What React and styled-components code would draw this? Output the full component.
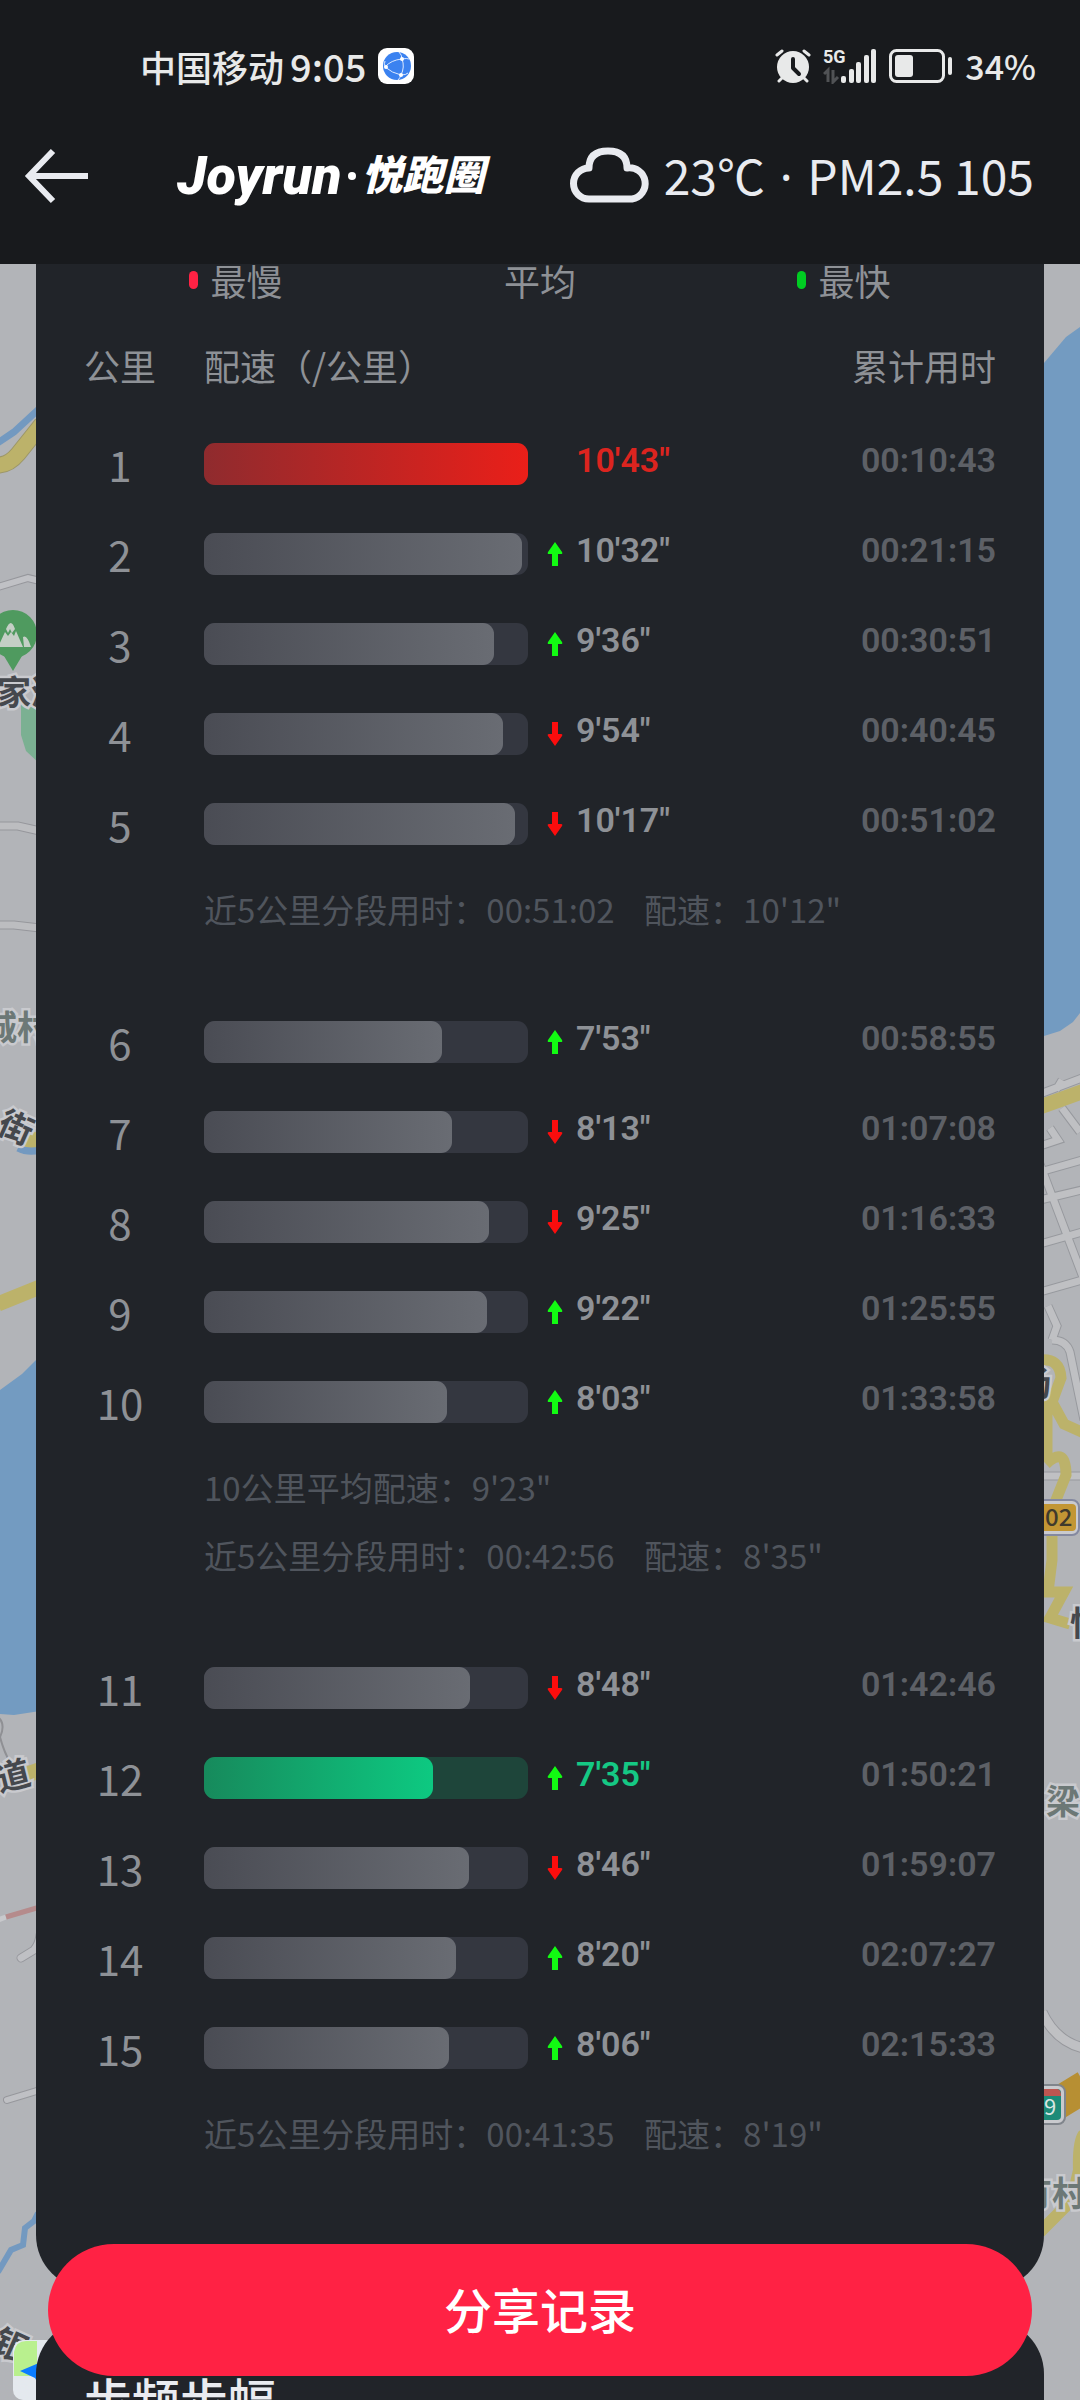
import React from "react";
import styled, { createGlobalStyle } from "styled-components";

const GlobalStyle = createGlobalStyle`
    * {
        box-sizing: border-box;
    }
    body {
        margin: 0;
        background-color: #b2b4b8;
        font-family: "Noto Sans CJK SC", "Noto Sans", sans-serif;
    }
`

const Screen = styled.div`
    position: relative;
    display: flex;
    flex-direction: column;
    height: 100vh;
    overflow: hidden;
`
const MapSvg = styled.svg`
    position: absolute;
    top: 0;
    left: 0;
    width: 100%;
    height: 100%;
    font-weight: 700;
`
const Header = styled.header`
    position: relative;
    flex: none;
    padding-bottom: 44px;
    background-color: #181a1d;
    color: #e9ebf0;
`
const StatusBar = styled.div`
    display: flex;
    align-items: center;
    justify-content: space-between;
    height: 132px;
    padding: 0 44px 0 140px;
    font-size: 36px;
    font-weight: 500;
    line-height: 44px;
    color: #e8e9e9;
`
const StatusGroup = styled.div`
    display: flex;
    align-items: center;
    gap: 12px;
`
const Carrier = styled.span`
    display: flex;
    align-items: center;
    gap: 6px;
`
const Clock = styled.span`
    font-size: 38px;
`
const BatteryLevel = styled.span`
    font-size: 34px;
`
const NavBar = styled.div`
    display: flex;
    align-items: center;
    height: 88px;
    padding: 0 46px 0 24px;
`
const BackButton = styled.button`
    display: flex;
    padding: 0;
    border: none;
    background: none;
    color: inherit;
    cursor: pointer;
`
const Logo = styled.h1`
    flex: 1;
    display: flex;
    align-items: center;
    gap: 6px;
    margin: 0 0 0 86px;
    font-family: Roboto, "Noto Sans CJK SC", sans-serif;
    font-size: 54px;
    font-style: italic;
    font-weight: 900;
    line-height: 60px;
    white-space: nowrap;
    color: #ffffff;
`
const LogoDot = styled.i`
    width: 8px;
    height: 8px;
    border-radius: 50%;
    background-color: #ffffff;
`
const LogoName = styled.span`
    font-size: 41px;
`
const Weather = styled.div`
    display: flex;
    align-items: center;
    gap: 14px;
    padding-bottom: 2px;
    font-size: 48px;
    line-height: 60px;
    white-space: nowrap;
`
const WeatherDot = styled.span`
    margin: 0 4px;
    font-family: "Noto Sans", sans-serif;
`
const Content = styled.main`
    position: relative;
    flex: 1;
    min-height: 0;
    padding: 0 36px;
    overflow: hidden;
`
const PaceCard = styled.section`
    padding: 0 48px 68px;
    border-radius: 0 0 54px 54px;
    background-color: #212429;
    color: #8e9196;
`
const CadenceCard = styled.section`
    margin-top: 31px;
    padding: 46px 48px;
    border-radius: 54px;
    background-color: #212429;
`
const CardTitle = styled.h2`
    margin: 0;
    font-size: 48px;
    font-weight: 500;
    line-height: 64px;
    color: #e9ebf0;
`
const Legend = styled.div`
    display: grid;
    grid-template-columns: repeat(3, 1fr);
    padding-bottom: 19px;
    font-size: 36px;
    line-height: 32px;
`
const LegendItem = styled.div`
    display: flex;
    align-items: center;
    justify-content: center;
    gap: 12px;
`
const LegendMark = styled.i`
    width: 9px;
    height: 18px;
    border-radius: 5px;
    background-color: ${props => props.$color};
`
const PaceTable = styled.table`
    width: 100%;
    border-spacing: 0;
    table-layout: fixed;

    th, td {
        padding: 0;
        font-weight: 400;
        text-align: left;
        white-space: nowrap;
    }
`
const Col = styled.col`
    width: ${props => props.$width}px;
`
const HeadRow = styled.tr`
    height: 104px;
    font-size: 36px;
    line-height: 48px;

    && th {
        padding-bottom: 4px;
    }
`
const SplitRow = styled.tr`
    height: 90px;
`
const HeadKm = styled.th`
    && {
        padding-right: 48px;
        text-align: center;
    }
`
const HeadTime = styled.th`
    && {
        text-align: right;
    }
`
const KmCell = styled.th`
    font-size: 42px;
    line-height: 48px;

    && {
        padding-right: 48px;
        text-align: center;
    }
`
const Track = styled.div`
    height: 42px;
    border-radius: 11px;
    background-color: ${props => tones[props.$tone].track};
`
const Fill = styled.div`
    height: 42px;
    border-radius: 11px;
    background-image: ${props => tones[props.$tone].fill};
`
const TrendCell = styled.td`
    line-height: 0;

    && {
        padding-left: 6px;
        text-align: center;
    }
`
const PaceCell = styled.td`
    font-family: Roboto, "Noto Sans CJK SC", sans-serif;
    font-size: 34px;
    line-height: 48px;
    color: ${props => tones[props.$tone].text};

    && {
        padding-bottom: 8px;
        font-weight: 600;
    }
`
const TimeCell = styled(PaceCell)`
    color: #5d6066;

    && {
        text-align: right;
    }
`
const NoteCell = styled.td`
    font-size: 33px;
    color: #50555d;

    && {
        padding: 6px 0 54px;
        white-space: pre;
    }
`
const NoteLine = styled.p`
    margin: 0;
    line-height: 68px;
`
const ShareButton = styled.button`
    position: absolute;
    right: 48px;
    bottom: 24px;
    left: 48px;
    height: 132px;
    padding: 0 0 4px;
    border: none;
    border-radius: 66px;
    background-color: #ff2244;
    color: #ffffff;
    font-family: inherit;
    font-size: 48px;
    font-weight: 500;
    cursor: pointer;
`

const tones = {
    normal: {
        track: "#343740",
        fill: "linear-gradient(90deg, #4a4c54, #696c73)",
        text: "#8e9196"
    },
    slow: {
        track: "#48282b",
        fill: "linear-gradient(90deg, #8f2b2e, #ea1f19)",
        text: "#dc241f"
    },
    fast: {
        track: "#1e453a",
        fill: "linear-gradient(90deg, #178a5c, #0dc981)",
        text: "#15c884"
    }
}

// pace is in seconds per kilometre
const groups = [
    {
        splits: [
            { km: 1, pace: 643, total: "00:10:43", tone: "slow" },
            { km: 2, pace: 632, total: "00:21:15", trend: "up" },
            { km: 3, pace: 576, total: "00:30:51", trend: "up" },
            { km: 4, pace: 594, total: "00:40:45", trend: "down" },
            { km: 5, pace: 617, total: "00:51:02", trend: "down" }
        ],
        notes: ["近5公里分段用时：00:51:02    配速：10'12\""]
    },
    {
        splits: [
            { km: 6, pace: 473, total: "00:58:55", trend: "up" },
            { km: 7, pace: 493, total: "01:07:08", trend: "down" },
            { km: 8, pace: 565, total: "01:16:33", trend: "down" },
            { km: 9, pace: 562, total: "01:25:55", trend: "up" },
            { km: 10, pace: 483, total: "01:33:58", trend: "up" }
        ],
        notes: [
            "10公里平均配速：9'23\"",
            "近5公里分段用时：00:42:56    配速：8'35\""
        ]
    },
    {
        splits: [
            { km: 11, pace: 528, total: "01:42:46", trend: "down" },
            { km: 12, pace: 455, total: "01:50:21", trend: "up", tone: "fast" },
            { km: 13, pace: 526, total: "01:59:07", trend: "down" },
            { km: 14, pace: 500, total: "02:07:27", trend: "up" },
            { km: 15, pace: 486, total: "02:15:33", trend: "up" }
        ],
        notes: ["近5公里分段用时：00:41:35    配速：8'19\""]
    }
]

const slowest = 643

const formatPace = (seconds) => {
    const rest = String(seconds % 60).padStart(2, "0")
    return `${Math.floor(seconds / 60)}′${rest}″`
}

const MapLabel = ({ x, y, turn, color = "#45484d", children }) => (
    <text
        x={x}
        y={y}
        fontSize="34"
        fill={color}
        stroke="#c9cace"
        strokeWidth="5"
        paintOrder="stroke"
        transform={turn ? `rotate(${turn} ${x + 17} ${y - 12})` : undefined}
    >
        {children}
    </text>
)

const MapBackground = () => (
    <MapSvg viewBox="0 0 1080 2400" preserveAspectRatio="none" aria-hidden="true">
        <rect width="1080" height="2400" fill="#b2b4b8" />

        {/* west side */}
        <g fill="none">
            <path d="M40 396V408L14 432L-4 444" stroke="#7399c0" strokeWidth="7" />
            <path d="M42 424L18 454Q8 466-4 465" stroke="#9c9668" strokeWidth="17" />
            <path d="M42 424L18 454Q8 466-4 465" stroke="#bcb26a" strokeWidth="15" />
            <path d="M-2 587L28 578L40 581" stroke="#96979c" strokeWidth="8" />
            <path d="M-2 587L28 578L40 581" stroke="#c0c1c5" strokeWidth="6" />
            <path d="M-2 826H18L40 831M-2 925H14L40 928" stroke="#96979c" strokeWidth="9" />
            <path d="M-2 826H18L40 831M-2 925H14L40 928" stroke="#bcbdc0" strokeWidth="7" />
            <path d="M-2 1304L40 1287" stroke="#bcb26a" strokeWidth="15" />
            <path d="M-2 1717Q6 1724 0 1737Q4 1752 10 1762" stroke="#8f9094" strokeWidth="2" />
            <path d="M26 1775L40 1770" stroke="#bcb26a" strokeWidth="16" />
            <path d="M-2 1920L6 1917" stroke="#c8c9cc" strokeWidth="5" />
            <path d="M6 1917L40 1907" stroke="#b58b8c" strokeWidth="5" />
            <path d="M21 1958L34 1950Q39 1944 40 1935" stroke="#96979c" strokeWidth="9" strokeLinecap="round" />
            <path d="M21 1958L34 1950Q39 1944 40 1935" stroke="#bfc0c4" strokeWidth="7" strokeLinecap="round" />
            <path d="M7 2100L40 2090" stroke="#96979c" strokeWidth="8" strokeLinecap="round" />
            <path d="M7 2100L40 2090" stroke="#bfc0c4" strokeWidth="6" strokeLinecap="round" />
            <path d="M38 2213L34 2221L25 2228L23 2245L11 2250L-2 2272" stroke="#7399c0" strokeWidth="6" />
        </g>
        <path d="M21 704H40V764L26 751L21 735Z" fill="#7bb092" />
        <path d="M0 1390L22 1374L40 1356V1711L14 1715L0 1714Z" fill="#739bc1" />
        <path d="M24 1146Q28 1130 40 1132V1148H28Z" fill="#bcb26a" />
        <path d="M18 1148Q28 1153 40 1150" fill="none" stroke="#7399c0" strokeWidth="7" />
        <circle cx="13" cy="634" r="24" fill="#4f9a5f" />
        <path d="M4 656L13 671L22 656Z" fill="#4f9a5f" />
        <path d="M-2 647L5 632L8 636L11 632L14 636L16 631L23 647ZM6 629Q11 617 15 629L12 633L10 629L8 633ZM24 647L23 637Q27 634 31 647Z" fill="#c4cfc6" />
        <MapLabel x={-3} y={705}>家湾</MapLabel>
        <MapLabel x={-17} y={1040} color="#6c7876">城村</MapLabel>
        <MapLabel x={-1} y={1140} turn={24}>街</MapLabel>
        <MapLabel x={-4} y={1788} turn={-14}>道</MapLabel>
        <MapLabel x={-6} y={2358} turn={24}>银</MapLabel>
        <rect x="13" y="2340" width="62" height="60" rx="10" fill="#e4e9ee" />
        <path d="M14 2376V2352Q16 2341 26 2341H37V2376Z" fill="#b9f08e" />
        <path d="M20 2371L60 2354L44 2394L35 2378Z" fill="#0a7cff" />

        {/* east side */}
        <path d="M1044 363L1066 337L1080 327V1013L1073 1022L1060 1031L1044 1036Z" fill="#739bc1" />
        <g fill="none">
            <path
                d="M1040 1094L1082 1078M1056 1090L1062 1080M1040 1146L1058 1140L1050 1128M1062 1108L1080 1132M1040 1172L1082 1160M1040 1200L1082 1190M1040 1244L1082 1232M1040 1164L1084 1280M1040 1292L1082 1280M1048 1306L1057 1326L1052 1340M1052 1340Q1066 1340 1070 1352L1084 1420M1040 1476H1082"
                stroke="#97999e"
                strokeWidth="9"
            />
            <path
                d="M1040 1094L1082 1078M1056 1090L1062 1080M1040 1146L1058 1140L1050 1128M1062 1108L1080 1132M1040 1172L1082 1160M1040 1200L1082 1190M1040 1244L1082 1232M1040 1164L1084 1280M1040 1292L1082 1280M1048 1306L1057 1326L1052 1340M1052 1340Q1066 1340 1070 1352L1084 1420M1040 1476H1082"
                stroke="#bfc0c3"
                strokeWidth="7"
            />
            <path d="M1040 1107L1084 1091" stroke="#bcb26a" strokeWidth="15" />
            <path
                d="M1040 1360Q1060 1358 1061 1378L1052 1402L1064 1424L1084 1433M1047 1400V1462M1046 1464Q1066 1445 1066 1475L1052 1510V1560L1048 1592H1064L1050 1618L1070 1624"
                stroke="#bcb26a"
                strokeWidth="11"
            />
            <path d="M1042 2012Q1056 2042 1084 2048" stroke="#96979c" strokeWidth="11" />
            <path d="M1042 2012Q1056 2042 1084 2048" stroke="#bfc0c3" strokeWidth="9" />
            <path d="M1084 2134Q1078 2142 1079 2170L1072 2200L1040 2232" stroke="#bcb26a" strokeWidth="12" />
            <path d="M1050 2108L1086 2086" stroke="#b78f33" strokeWidth="32" />
        </g>
        <rect x="1012" y="1500" width="67" height="35" rx="7" fill="#c9cace" stroke="#8489a0" strokeWidth="2" />
        <rect x="1016" y="1504" width="60" height="27" rx="4" fill="#c29634" />
        <text x="1045" y="1526" fontSize="24" fontWeight="500" fill="#3f3a2c">02</text>
        <rect x="1020" y="2085" width="45" height="39" rx="7" fill="#c9cace" stroke="#80858c" strokeWidth="2" />
        <rect x="1024" y="2089" width="37" height="31" rx="4" fill="#1d8b78" />
        <path d="M1024 2096V2089H1057Q1061 2089 1061 2096Z" fill="#bd5651" />
        <text x="1044" y="2115" fontSize="22" fontWeight="400" fill="#d8e6e2">9</text>
        <MapLabel x={1017} y={1396}>场</MapLabel>
        <MapLabel x={1070} y={1636}>怡</MapLabel>
        <MapLabel x={1046} y={1814} color="#6c7876">梁</MapLabel>
        <MapLabel x={1018} y={2206} color="#6c7876">有村</MapLabel>
    </MapSvg>
)

const BrowserIcon = () => (
    <svg width="36" height="36" viewBox="0 0 36 36" aria-hidden="true">
        <rect width="36" height="36" rx="9" fill="#ffffff" />
        <circle cx="19" cy="18" r="14" fill="#3b82f0" />
        <g fill="none" stroke="#dce9ff" strokeWidth="1">
            <path d="M7 19Q13 12 24 11Q29 10 31 11M7 19Q14 25 23 27Q28 27 30 25M24 11Q27 19 23 27M21 4Q24 7 24 11M7 19Q6 15 7 13M23 27Q22 30 20 32" />
        </g>
        <g fill="#ffffff">
            <circle cx="24" cy="11" r="2" />
            <circle cx="8" cy="19" r="2" />
            <circle cx="23" cy="27" r="2" />
        </g>
    </svg>
)

const AlarmIcon = () => (
    <svg width="36" height="34" viewBox="0 0 36 34" aria-hidden="true">
        <circle cx="18" cy="18" r="16" fill="#e8e9e9" />
        <path d="M2 6L7 2M34 6L29 2M4 32L8 28M32 32L28 28" stroke="#e8e9e9" strokeWidth="3" strokeLinecap="round" />
        <path d="M18 10V19L24 25" fill="none" stroke="#181a1d" strokeWidth="4" strokeLinecap="round" strokeLinejoin="round" />
    </svg>
)

const SignalIcon = () => (
    <svg width="54" height="36" viewBox="0 0 54 36" aria-label="5G">
        <text x="0" y="15" fontSize="18" fontWeight="700" fontFamily="Roboto, sans-serif" fill="#e8e9e9">5G</text>
        <path d="M5 34V22L1 26M10 22V34L15 29" fill="none" stroke="#505255" strokeWidth="3" />
        <g fill="#e8e9e9">
            <rect x="18" y="28" width="5" height="7" rx="2" />
            <rect x="26" y="21" width="5" height="14" rx="2" />
            <rect x="33" y="14" width="5" height="21" rx="2" />
            <rect x="41" y="7" width="5" height="28" rx="2" />
            <rect x="48" y="1" width="5" height="34" rx="2" />
        </g>
    </svg>
)

const BatteryIcon = () => (
    <svg width="64" height="34" viewBox="0 0 64 34" aria-hidden="true">
        <rect x="1.5" y="1.5" width="53" height="31" rx="6" fill="none" stroke="#e8e9e9" strokeWidth="3" />
        <rect x="6" y="6" width="18" height="22" rx="3" fill="#e8e9e9" />
        <rect x="59" y="8" width="4" height="18" rx="2" fill="#e8e9e9" />
    </svg>
)

const BackIcon = () => (
    <svg width="67" height="58" viewBox="0 0 67 58" aria-hidden="true">
        <path d="M29 4L5 29L29 54M5 29H64" fill="none" stroke="#e9ebf0" strokeWidth="6" />
    </svg>
)

const CloudIcon = () => (
    <svg width="80" height="56" viewBox="0 0 80 56" aria-hidden="true">
        <path
            d="M19 52A15 15 0 0 1 19 21Q19 4 38 4Q57 4 57 21A15 15 0 0 1 62 52Z"
            fill="none"
            stroke="#e9ebf0"
            strokeWidth="7"
            strokeLinejoin="round"
        />
    </svg>
)

const TrendIcon = ({ direction }) => (
    <svg width="16" height="24" viewBox="0 0 16 24" aria-hidden="true">
        {direction === "up"
            ? <path d="M8 0L15 10Q16 12 14 12H11V24H5V12H2Q0 12 1 10Z" fill="#12fb12" />
            : <path d="M8 24L15 14Q16 12 14 12H11V0H5V12H2Q0 12 1 14Z" fill="#fb0d0d" />}
    </svg>
)

const Split = ({ km, pace, total, trend, tone = "normal" }) => (
    <SplitRow>
        <KmCell scope="row">{km}</KmCell>
        <td>
            <Track $tone={tone}>
                <Fill $tone={tone} style={{ width: `${pace / slowest * 100}%` }} />
            </Track>
        </td>
        <TrendCell>{trend && <TrendIcon direction={trend} />}</TrendCell>
        <PaceCell $tone={tone}>{formatPace(pace)}</PaceCell>
        <TimeCell $tone="normal">{total}</TimeCell>
    </SplitRow>
)

class App extends React.Component{
    render(){
        return(
            <Screen>
                <GlobalStyle />
                <MapBackground />
                <Header>
                    <StatusBar>
                        <StatusGroup>
                            <Carrier>
                                中国移动
                                <Clock>9:05</Clock>
                            </Carrier>
                            <BrowserIcon />
                        </StatusGroup>
                        <StatusGroup>
                            <AlarmIcon />
                            <SignalIcon />
                            <BatteryIcon />
                            <BatteryLevel>34%</BatteryLevel>
                        </StatusGroup>
                    </StatusBar>
                    <NavBar>
                        <BackButton aria-label="返回">
                            <BackIcon />
                        </BackButton>
                        <Logo>
                            Joyrun
                            <LogoDot />
                            <LogoName>悦跑圈</LogoName>
                        </Logo>
                        <Weather>
                            <CloudIcon />
                            <span>23℃ <WeatherDot>·</WeatherDot> PM2.5 105</span>
                        </Weather>
                    </NavBar>
                </Header>
                <Content>
                    <PaceCard>
                        <Legend>
                            <LegendItem><LegendMark $color="#ff2244" />最慢</LegendItem>
                            <LegendItem>平均</LegendItem>
                            <LegendItem><LegendMark $color="#00cc22" />最快</LegendItem>
                        </Legend>
                        <PaceTable>
                            <colgroup>
                                <Col $width={120} />
                                <Col $width={324} />
                                <Col $width={48} />
                                <col />
                                <Col $width={180} />
                            </colgroup>
                            <thead>
                                <HeadRow>
                                    <HeadKm scope="col">公里</HeadKm>
                                    <th scope="col" colSpan={3}>配速（/公里）</th>
                                    <HeadTime scope="col">累计用时</HeadTime>
                                </HeadRow>
                            </thead>
                            {groups.map(group => (
                                <tbody key={group.splits[0].km}>
                                    {group.splits.map(split => <Split key={split.km} {...split} />)}
                                    <tr>
                                        <td />
                                        <NoteCell colSpan={4}>
                                            {group.notes.map(note => <NoteLine key={note}>{note}</NoteLine>)}
                                        </NoteCell>
                                    </tr>
                                </tbody>
                            ))}
                        </PaceTable>
                    </PaceCard>
                    <CadenceCard>
                        <CardTitle>步频步幅</CardTitle>
                    </CadenceCard>
                </Content>
                <ShareButton>分享记录</ShareButton>
            </Screen>
        )
    }
}

export default App;
